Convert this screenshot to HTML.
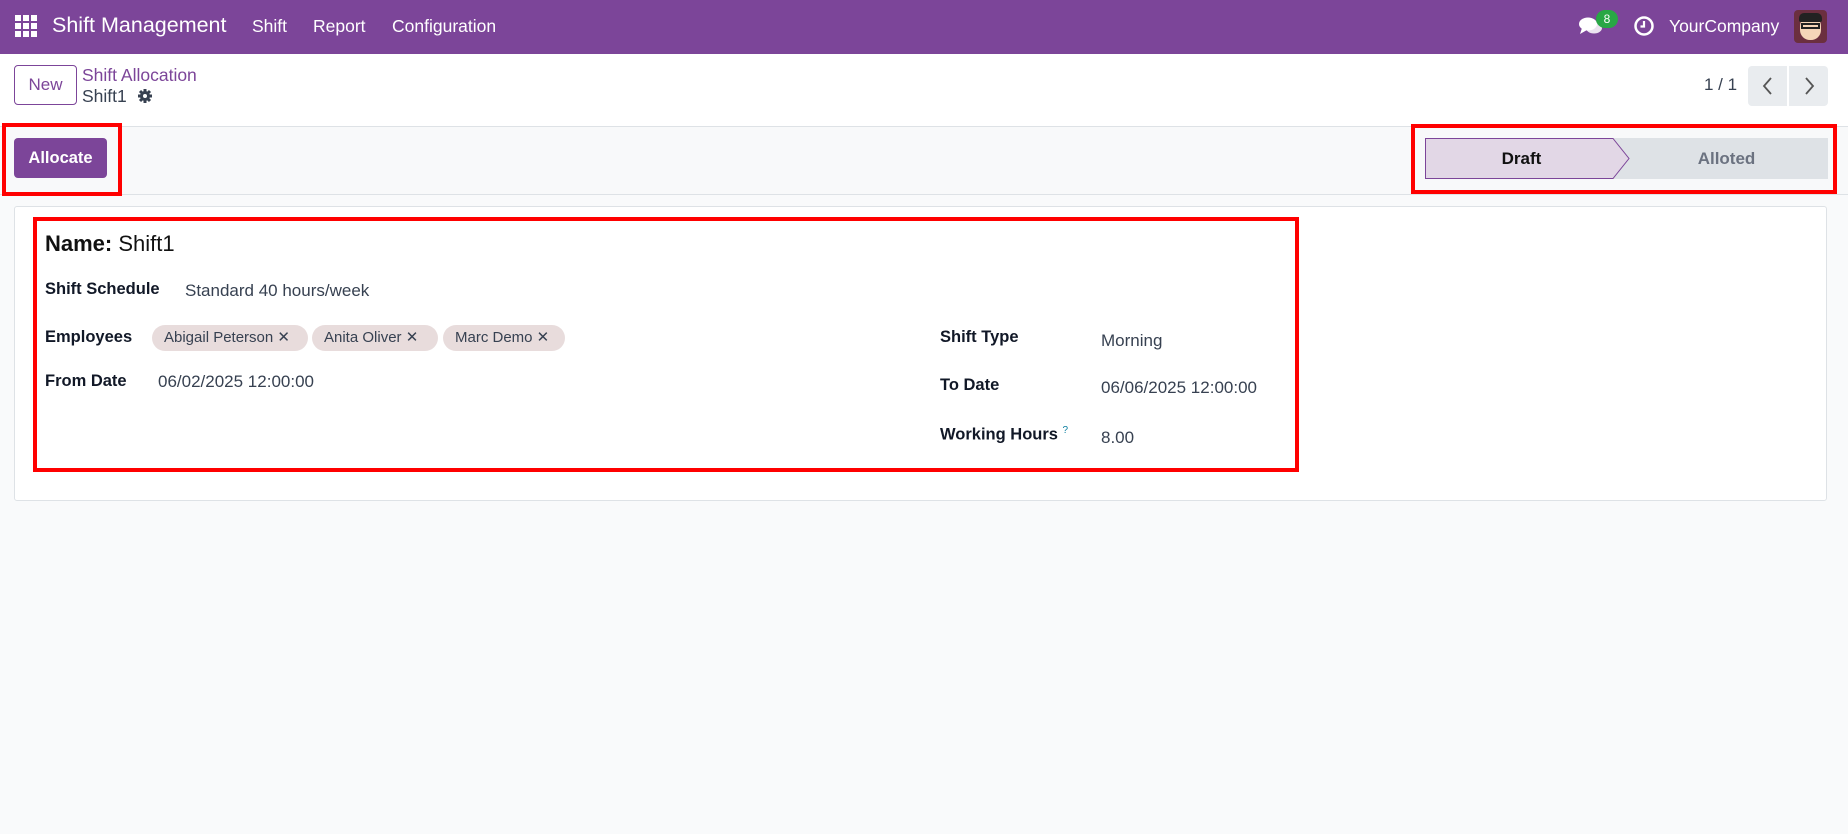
<!DOCTYPE html>
<html><head><meta charset="utf-8"><style>
*{box-sizing:border-box;margin:0;padding:0}
body{width:1848px;height:834px;background:#f9fafb;font-family:"Liberation Sans","DejaVu Sans",sans-serif;color:#374151;position:relative;overflow:hidden;font-size:17px}
.abs{position:absolute;white-space:nowrap}
.nav{position:absolute;left:0;top:0;width:1848px;height:54px;background:#7c4599;color:#fff}
.cp{position:absolute;left:0;top:54px;width:1848px;height:73px;background:#fff;border-bottom:1px solid #dee2e6}
.sb{position:absolute;left:0;top:127px;width:1848px;height:68px;background:#f8f9fa;border-bottom:1px solid #dee2e6}
.red{position:absolute;border:4px solid #ff0000}
.lbl{font-weight:bold;color:#111827;font-size:16.5px}
.tag{position:absolute;top:325px;height:26px;border-radius:13px;background:#e8dcdc;color:#374151;font-size:15px;line-height:26px;padding-left:12px}
</style></head><body>
<div class="nav">
 <svg class="abs" style="left:15px;top:15px" width="22" height="22" viewBox="0 0 22 22" fill="#fff"><rect x="0" y="0" width="6" height="6"/><rect x="8" y="0" width="6" height="6"/><rect x="16" y="0" width="6" height="6"/><rect x="0" y="8" width="6" height="6"/><rect x="8" y="8" width="6" height="6"/><rect x="16" y="8" width="6" height="6"/><rect x="0" y="16" width="6" height="6"/><rect x="8" y="16" width="6" height="6"/><rect x="16" y="16" width="6" height="6"/></svg>
 <div class="abs" style="left:52px;top:13px;font-size:21.5px">Shift Management</div>
 <div class="abs" style="left:252px;top:16px;font-size:17.5px">Shift</div>
 <div class="abs" style="left:313px;top:16px;font-size:17.5px">Report</div>
 <div class="abs" style="left:392px;top:16px;font-size:17.5px">Configuration</div>
 <svg class="abs" style="left:1579px;top:16px" width="24" height="20" viewBox="0 0 24 20" fill="#fff"><ellipse cx="9" cy="8" rx="9" ry="6.5"/><path d="M3 12 L1 18 L8 14Z"/><ellipse cx="15" cy="12" rx="8" ry="5.5" fill="#fff" opacity=".85"/></svg>
 <div class="abs" style="left:1596px;top:10px;width:22px;height:18px;border-radius:9px;background:#28a745;font-size:12px;line-height:18px;text-align:center">8</div>
 <svg class="abs" style="left:1633px;top:15px" width="22" height="22" viewBox="0 0 22 22"><circle cx="11" cy="11" r="8.5" fill="none" stroke="#fff" stroke-width="2.5"/><path d="M11 6v5.5h-3.5" fill="none" stroke="#fff" stroke-width="2.2"/></svg>
 <div class="abs" style="left:1669px;top:16px;font-size:17.5px">YourCompany</div>
 <div class="abs" style="left:1794px;top:10px;width:33px;height:33px;border-radius:4px;background:#6b2f3f;overflow:hidden"><div style="position:absolute;left:6px;top:6px;width:21px;height:24px;border-radius:10px;background:#f5d5b8"></div><div style="position:absolute;left:5px;top:3px;width:23px;height:9px;border-radius:5px 5px 2px 2px;background:#222"></div><div style="position:absolute;left:7px;top:13px;width:19px;height:6px;border:2px solid #222"></div></div>
</div>
<div class="cp">
 <div class="abs" style="left:14px;top:11px;width:63px;height:40px;border:1px solid #7c4599;border-radius:4px;color:#7c4599;text-align:center;line-height:38px;font-size:17px">New</div>
 <div class="abs" style="left:82px;top:11px;color:#7c4599;font-size:17.5px">Shift Allocation</div>
 <div class="abs" style="left:82px;top:32px;color:#374151;font-size:17.5px">Shift1</div>
 <svg class="abs" style="left:137px;top:34px" width="16" height="16" viewBox="0 0 16 16"><circle cx="8" cy="8" r="5" fill="#374151"/><g stroke="#374151" stroke-width="3"><path d="M8 1v14M1 8h14M3 3l10 10M13 3L3 13"/></g><circle cx="8" cy="8" r="2" fill="#fff"/></svg>
 <div class="abs" style="left:1704px;top:21px;font-size:17px">1 / 1</div>
 <div class="abs" style="left:1748px;top:12px;width:39px;height:40px;background:#e9ecef;border-radius:4px 0 0 4px"></div>
 <div class="abs" style="left:1789px;top:12px;width:39px;height:40px;background:#e9ecef;border-radius:0 4px 4px 0"></div>
 <svg class="abs" style="left:1760px;top:22px" width="16" height="20" viewBox="0 0 16 20"><path d="M11 2L4 10l7 8" fill="none" stroke="#555" stroke-width="1.8"/></svg>
 <svg class="abs" style="left:1801px;top:22px" width="16" height="20" viewBox="0 0 16 20"><path d="M5 2l7 8-7 8" fill="none" stroke="#555" stroke-width="1.8"/></svg>
</div>
<div class="sb">
 <div class="abs" style="left:14px;top:11px;width:93px;height:40px;background:#7c4599;border-radius:4px;color:#fff;font-weight:bold;text-align:center;line-height:40px;font-size:16.5px">Allocate</div>
 <div class="abs" style="left:1425px;top:11px;width:403px;height:41px;background:#dee2e6"></div>
 <svg class="abs" style="left:1425px;top:11px" width="205" height="41" viewBox="0 0 205 41"><path d="M0.5 0.5H188L204 20.5L188 40.5H0.5Z" fill="#e2d7e6" stroke="#7c4599"/></svg>
 <div class="abs" style="left:1425px;top:22px;width:193px;text-align:center;font-weight:bold;color:#111;font-size:17px">Draft</div>
 <div class="abs" style="left:1625px;top:22px;width:203px;text-align:center;font-weight:bold;color:#6b7280;font-size:17px">Alloted</div>
</div>
<div class="abs" style="left:14px;top:206px;width:1813px;height:295px;background:#fff;border:1px solid #dee2e6;border-radius:3px"></div>
<div class="red" style="left:2px;top:123px;width:120px;height:73px"></div>
<div class="red" style="left:1411px;top:124px;width:426px;height:70px"></div>
<div class="red" style="left:33px;top:217px;width:1266px;height:255px"></div>
<div class="abs" style="left:45px;top:231px;font-size:22px;color:#111"><b>Name:</b> Shift1</div>
<div class="abs lbl" style="left:45px;top:280px">Shift Schedule</div>
<div class="abs" style="left:185px;top:281px">Standard 40 hours/week</div>
<div class="abs lbl" style="left:45px;top:328px">Employees</div>
<div class="tag" style="left:152px;width:156px">Abigail Peterson ✕</div>
<div class="tag" style="left:312px;width:126px">Anita Oliver ✕</div>
<div class="tag" style="left:443px;width:122px">Marc Demo ✕</div>
<div class="abs lbl" style="left:45px;top:372px">From Date</div>
<div class="abs" style="left:158px;top:372px">06/02/2025 12:00:00</div>
<div class="abs lbl" style="left:940px;top:328px">Shift Type</div>
<div class="abs" style="left:1101px;top:331px">Morning</div>
<div class="abs lbl" style="left:940px;top:376px">To Date</div>
<div class="abs" style="left:1101px;top:378px">06/06/2025 12:00:00</div>
<div class="abs lbl" style="left:940px;top:425px">Working Hours <sup style="color:#0d7fa0;font-size:10px;font-weight:normal">?</sup></div>
<div class="abs" style="left:1101px;top:428px">8.00</div>
</body></html>
